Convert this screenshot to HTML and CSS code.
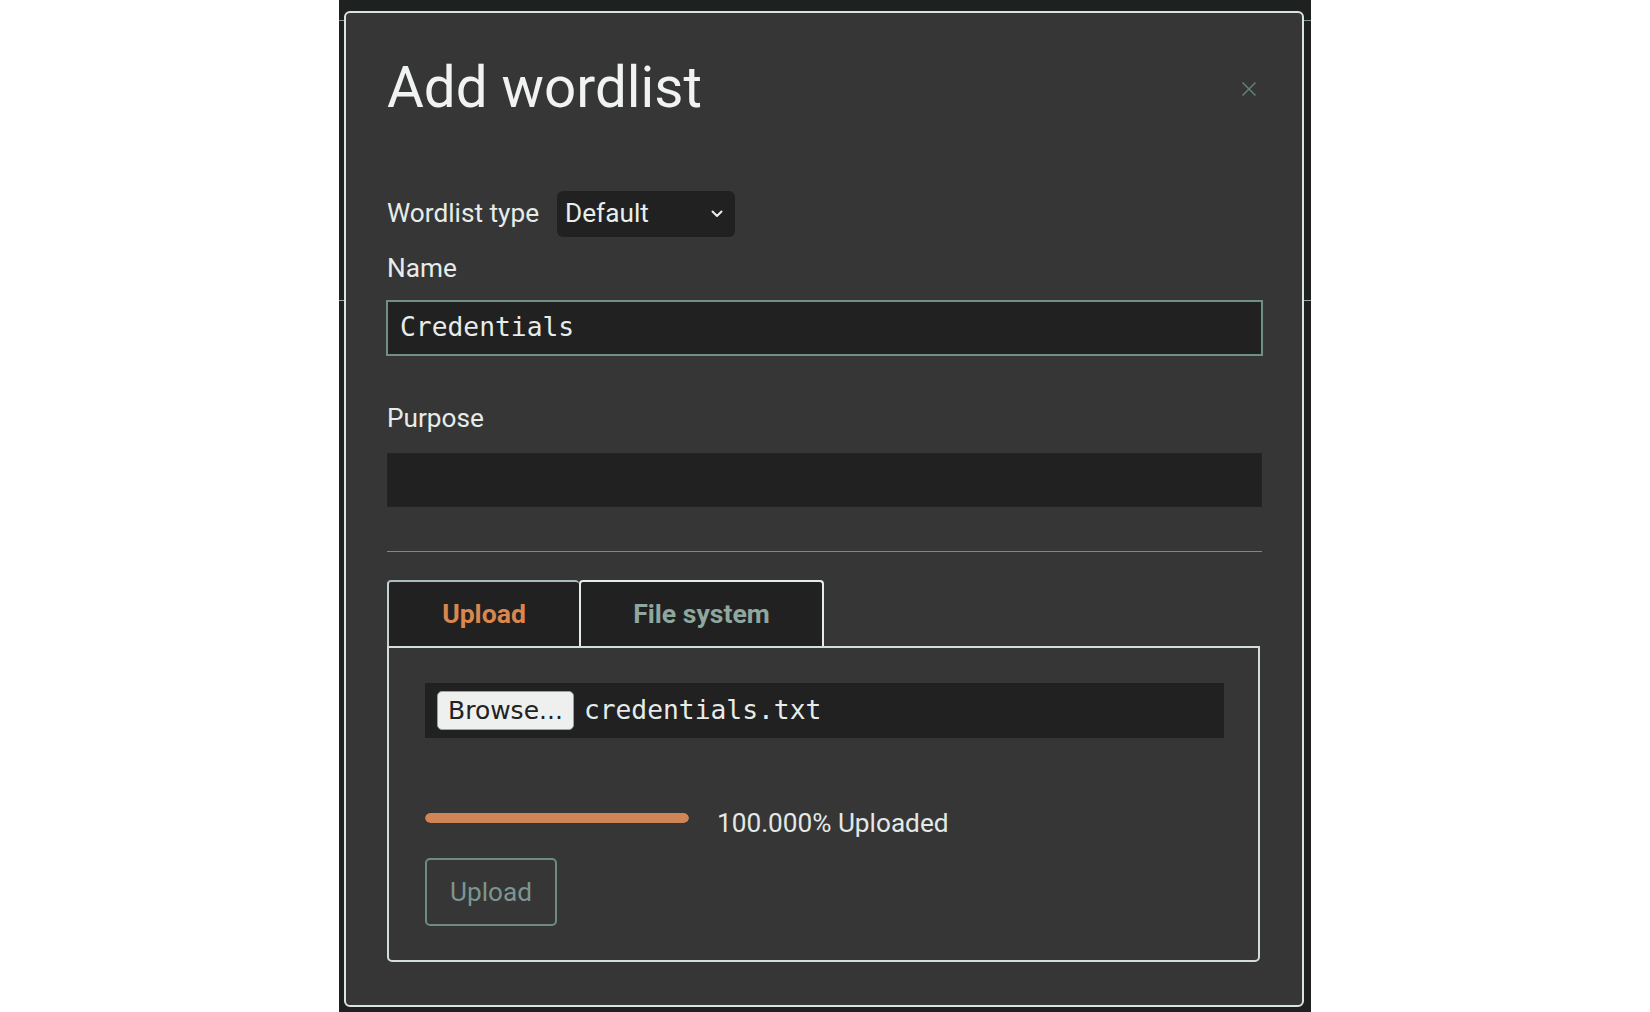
FILE: index.html
```html
<!DOCTYPE html>
<html lang="en">
<head>
<meta charset="utf-8">
<title>Add wordlist</title>
<link rel="stylesheet" href="styles.css">
</head>
<body>
<div class="backdrop">
  <div class="modal">
    <div class="modal-header">
      <h1 class="modal-title">Add wordlist</h1>
      <button class="close" aria-label="Close">
        <svg width="16" height="16" viewBox="0 0 16 16"><path d="M1.5 1.5 L14.5 14.5 M14.5 1.5 L1.5 14.5" stroke="#62807a" stroke-width="1.5" fill="none"/></svg>
      </button>
    </div>

    <div class="type-row">
      <span class="label">Wordlist type</span>
      <div class="select">
        <span>Default</span>
        <svg width="12" height="8" viewBox="0 0 12 8"><path d="M1.5 1.5 L6 6 L10.5 1.5" stroke="#e8eeec" stroke-width="2" fill="none" stroke-linecap="round" stroke-linejoin="round"/></svg>
      </div>
    </div>

    <div class="group group-name">
      <div class="label">Name</div>
      <div class="input input-focus">Credentials</div>
    </div>

    <div class="group group-purpose">
      <div class="label">Purpose</div>
      <div class="input input-plain"></div>
    </div>

    <hr class="divider">

    <div class="tabs">
      <div class="tab tab-active">Upload</div>
      <div class="tab tab-other">File system</div>
    </div>
    <div class="panel">
      <div class="file-input">
        <span class="browse">Browse...</span>
        <span class="file-name">credentials.txt</span>
      </div>
      <div class="progress-row">
        <div class="bar"><div class="bar-fill" style="width:100%"></div></div>
        <span class="progress-text">100.000% Uploaded</span>
      </div>
      <button class="upload-btn">Upload</button>
    </div>
  </div>
</div>
</body>
</html>
```

FILE: styles.css
```css
html, body {
  margin: 0;
  padding: 0;
  background: #ffffff;
}

body {
  font-family: Roboto, "Liberation Sans", sans-serif;
  font-size: 26.2px;
  line-height: 37.5px;
  color: #e6ecea;
}

.backdrop {
  width: 972px;
  height: 1012px;
  margin: 0 auto;
  box-sizing: border-box;
  padding: 11px 7px 0 5px;
  background-color: #1f2020;
  background-image:
    linear-gradient(to bottom, transparent 20px, #7f9b94 20px, #7f9b94 21px, transparent 21px),
    linear-gradient(to bottom, transparent 300px, #9aa9a6 300px, #9aa9a6 301px, transparent 301px);
  overflow: hidden;
}

.modal {
  width: 960px;
  box-sizing: border-box;
  background: #363636;
  border: 2px solid #d9e3e0;
  border-radius: 6px;
  padding: 42px 40px 43px 41px;
}

.modal-header {
  display: flex;
  align-items: center;
  justify-content: space-between;
}

.modal-title {
  margin: 0;
  font-size: 56.5px;
  font-weight: 400;
  line-height: 1.2;
  color: #f0f3f2;
}

.close {
  background: none;
  border: 0;
  padding: 0;
  margin-right: 5px;
  width: 16px;
  height: 16px;
  display: flex;
}

.type-row {
  display: flex;
  align-items: center;
  height: 46px;
  margin-top: 68px;
}

.label {
  color: #e6ecea;
  line-height: 37.5px;
}

.type-row .label {
  margin-right: 18px;
}

.select {
  width: 178px;
  height: 46px;
  box-sizing: border-box;
  background: #212121;
  border-radius: 6px;
  display: flex;
  align-items: center;
  justify-content: space-between;
  padding: 0 12px 0 8px;
  color: #e8eeec;
}

.group-name {
  margin-top: 13px;
}

.group-name .label {
  margin-bottom: 12.5px;
}

.group-purpose {
  margin-top: 44.7px;
}

.group-purpose .label {
  margin-bottom: 14.8px;
}

.input {
  box-sizing: border-box;
  background: #212121;
  font-family: "DejaVu Sans Mono", "Liberation Mono", monospace;
  font-size: 26.3px;
  color: #e6ecea;
  display: flex;
  align-items: center;
}

.input-focus {
  height: 56px;
  margin: 0 -1px;
  border: 2px solid #6f9087;
  padding: 0 12px;
}

.input-plain {
  height: 54px;
  border: 1px solid #232323;
}

.divider {
  margin: 44px 0 0 0;
  border: 0;
  height: 1px;
  background: #6f9087;
}

.tabs {
  display: flex;
  margin-top: 28px;
}

.tab {
  height: 66px;
  box-sizing: border-box;
  background: #212121;
  font-weight: 700;
  font-size: 26.6px;
  display: flex;
  align-items: center;
  justify-content: center;
  border-top-left-radius: 4px;
  border-top-right-radius: 4px;
}

.tab-active {
  width: 192px;
  color: #d9864f;
  border-top: 2px solid #a9bcbf;
  border-left: 2px solid #c4d2d0;
}

.tab-other {
  width: 245px;
  color: #8ea79f;
  border: 2px solid #e4ece9;
  border-bottom: 0;
}

.panel {
  box-sizing: border-box;
  height: 316px;
  margin-right: 2px;
  border: 2px solid #d3dedb;
  border-radius: 0 0 5px 5px;
  padding: 35px 34px 34px 36px;
}

.file-input {
  height: 55px;
  background: #212121;
  display: flex;
  align-items: center;
  padding-left: 12px;
}

.browse {
  height: 39px;
  box-sizing: border-box;
  display: flex;
  align-items: center;
  padding: 0 10px;
  background: #eef0ef;
  border: 1px solid #8ea5a0;
  border-radius: 5px;
  font-family: "DejaVu Sans", "Liberation Sans", sans-serif;
  font-size: 25px;
  color: #222222;
}

.file-name {
  margin-left: 10px;
  font-family: "DejaVu Sans Mono", "Liberation Mono", monospace;
  font-size: 26.3px;
  color: #e6ecea;
}

.progress-row {
  display: flex;
  align-items: flex-start;
  margin-top: 67.5px;
  line-height: 37.5px;
}

.bar {
  width: 264px;
  height: 10px;
  margin-top: 8px;
  border-radius: 5px;
  background: #212121;
  overflow: hidden;
}

.bar-fill {
  height: 100%;
  background: #cf8556;
  border-radius: 5px;
}

.progress-text {
  margin-left: 28px;
  color: #e3e9e7;
}

.upload-btn {
  display: block;
  margin-top: 15.5px;
  height: 68px;
  box-sizing: border-box;
  padding: 0 23px;
  background: transparent;
  border: 2px solid #6c8c83;
  border-radius: 5px;
  font-family: Roboto, "Liberation Sans", sans-serif;
  font-size: 26.2px;
  color: #7b968f;
}
```
